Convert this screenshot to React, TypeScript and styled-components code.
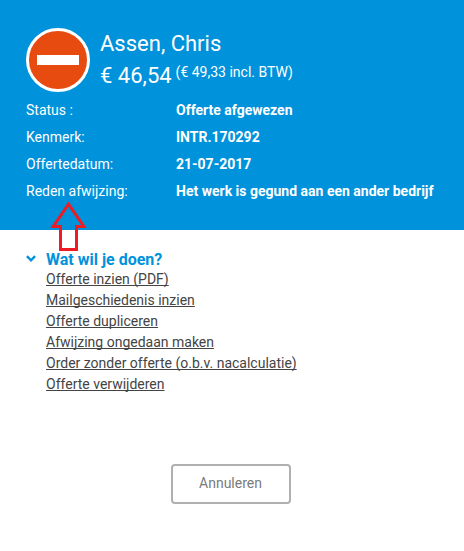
import React from "react";
import styled, { createGlobalStyle } from "styled-components";

const GlobalStyle = createGlobalStyle`
  * { box-sizing: border-box; }
  body { margin: 0; background: #fff; font-family: Roboto, sans-serif; font-size: 14px; }
`;
const Page = styled.main`
  position: relative; width: 464px; height: 551px; display: flex; flex-direction: column; align-items: stretch;
`;
const Header = styled.header`
  height: 230px; background: #0092db; color: #fff; padding: 28px 26px 0;
`;
const Summary = styled.div`display: flex; gap: 10px; height: 69px;`;
const StatusIcon = styled.svg`width: 64px; height: 64px; flex: none;`;
const Name = styled.h1`margin: 0; font-size: 22px; font-weight: 400; line-height: 32px;`;
const Price = styled.div`font-size: 22px; line-height: 32px; white-space: nowrap; display: flex; gap: 4px;`;
const Incl = styled.span`font-size: 14px; line-height: 25px;`;
const Details = styled.dl`
  margin: 0; display: grid; grid-template-columns: 150px 1fr; grid-auto-rows: 27px; line-height: 27px; white-space: nowrap;
`;
const Term = styled.dt`font-weight: 400;`;
const Value = styled.dd`margin: 0; font-weight: 700;`;
const Arrow = styled.svg`position: absolute; left: 50px; top: 201px; width: 38px; height: 52px;`;
const Actions = styled.section`padding: 20px 26px 0; height: 234px; display: flex;`;
const Chevron = styled.svg`width: 10px; height: 8px; margin: 5px 10px 0 0;`;
const Title = styled.h2`margin: 0; color: #0092db; font-size: 16px; line-height: 19px; font-weight: 700;`;
const Links = styled.ul`list-style: none; margin: 0; padding: 0;`;
const Item = styled.li`height: 21px; line-height: 21px;`;
const Link = styled.a`color: #444; text-decoration: underline; text-decoration-skip-ink: none;`;
const Cancel = styled.button`
  align-self: center; margin-right: 2px; width: 120px; height: 40px; padding: 0 1px 2px 0; border: 2px solid #b0b0b0; border-radius: 4px;
  background: #fff; color: #7b7b7b; font: 14px Roboto, sans-serif;
`;
const details = [
  ["Status :", "Offerte afgewezen"],
  ["Kenmerk:", "INTR.170292"],
  ["Offertedatum:", "21-07-2017"],
  ["Reden afwijzing:", "Het werk is gegund aan een ander bedrijf"],
];
const links = ["Offerte inzien (PDF)", "Mailgeschiedenis inzien", "Offerte dupliceren", "Afwijzing ongedaan maken", "Order zonder offerte (o.b.v. nacalculatie)", "Offerte verwijderen"];

export default function App() {
  return (
    <Page>
      <GlobalStyle />
      <Header>
        <Summary>
          <StatusIcon viewBox="0 0 64 64">
            <circle cx="32" cy="32" r="30.5" fill="#e84b10" stroke="#fff" strokeWidth="3" />
            <rect x="11" y="27" width="42" height="10" fill="#fff" />
          </StatusIcon>
          <div>
            <Name>Assen, Chris</Name>
            <Price>€ 46,54<Incl>(€ 49,33 incl. BTW)</Incl></Price>
          </div>
        </Summary>
        <Details>
          {details.map(([k, v]) => <React.Fragment key={k}><Term>{k}</Term><Value>{v}</Value></React.Fragment>)}
        </Details>
      </Header>
      <Actions>
        <Chevron viewBox="0 0 10 8"><path d="M.9 1.2 5 5.3 9.1 1.2" fill="none" stroke="#0092db" strokeWidth="2.4" /></Chevron>
        <div>
          <Title>Wat wil je doen?</Title>
          <Links>{links.map((l) => <Item key={l}><Link href="#">{l}</Link></Item>)}</Links>
        </div>
      </Actions>
      <Cancel>Annuleren</Cancel>
      <Arrow viewBox="0 0 38 52"><path d="M18.5 3.2 33.8 25.5H26.5V48.5H10.5V25.5H3.2Z" fill="none" stroke="#ed1c24" strokeWidth="3" strokeLinejoin="miter" /></Arrow>
    </Page>
  );
}
